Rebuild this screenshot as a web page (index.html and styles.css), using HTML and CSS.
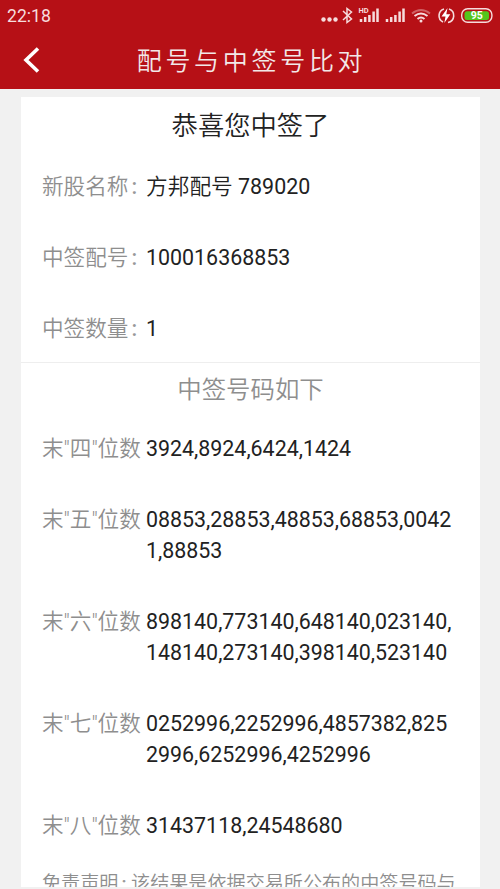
FILE: index.html
```html
<!DOCTYPE html>
<html lang="zh-CN">
<head>
<meta charset="utf-8">
<title>配号与中签号比对</title>
<link rel="stylesheet" href="styles.css">
</head>
<body>
<header>
  <div class="status">
    <span class="time">22:18</span>
    <svg class="icons" width="180" height="32" viewBox="0 0 180 32" fill="none" stroke="#f6dcdd">
      <g fill="#f6dcdd" stroke="none"><circle cx="3.500" cy="19.500" r="2.200"/><circle cx="9.500" cy="19.500" r="2.200"/><circle cx="15.500" cy="19.500" r="2.200"/></g>
      <path d="M23 11l8.500 8-4.500 3.500V8.500l4.500 3.500-8.500 8" stroke-width="1.500"/>
      <text x="38.500" y="13" class="hd">HD</text>
      <path d="M41 22v-3M45.200 22v-5M49.400 22v-7M53.600 22V11.500M57.500 22V8.500M67 22v-3M71.200 22v-5M75.400 22v-7M79.600 22V11.500M83.500 22V8.500" stroke-width="2.500"/>
      <path d="M92 13.500q9-7 18 0" stroke-width="2" opacity=".4"/>
      <path d="M94.500 16q6.500-5 13 0M97.500 19q3.500-3 7 0" stroke-width="2"/>
      <circle cx="101" cy="21" r="1.500" fill="#f6dcdd" stroke="none"/>
      <path d="M124 9a7 7 0 0 0-1 13M128 22.500a7 7 0 0 0 1-13.500" stroke-width="1.600"/>
      <path d="M127.500 8l-6 8.500h4l-1.200 6.500 6-8.800h-4z" fill="#fff" stroke="none"/>
      <rect x="141.700" y="8.800" width="30.200" height="13.500" rx="6" stroke-width="1.400"/>
      <rect x="144.500" y="11.200" width="24.500" height="8.800" rx="2.500" fill="#54c51c" stroke="none"/>
      <text x="156.700" y="19" class="battery">95</text>
    </svg>
  </div>
  <div class="nav">
    <svg class="back" width="20" height="30" viewBox="0 0 20 30"><path d="M17 2.500L5 14l12 11.500" fill="none" stroke="#fff" stroke-width="3.600"/></svg>
    <h1>配号与中签号比对</h1>
  </div>
</header>
<main>
  <h2>恭喜您中签了</h2>
  <dl class="summary">
    <dt>新股名称<span class="colon">:</span></dt><dd><span class="stock">方邦配号</span> 789020</dd>
    <dt>中签配号<span class="colon">:</span></dt><dd>100016368853</dd>
    <dt>中签数量<span class="colon">:</span></dt><dd>1</dd>
  </dl>
  <h3>中签号码如下</h3>
  <dl>
    <dt>末"四"位数</dt><dd>3924,8924,6424,1424</dd>
    <dt>末"五"位数</dt><dd>08853,28853,48853,68853,00421,88853</dd>
    <dt>末"六"位数</dt><dd>898140,773140,648140,023140,148140,273140,398140,523140</dd>
    <dt>末"七"位数</dt><dd>0252996,2252996,4857382,8252996,6252996,4252996</dd>
    <dt>末"八"位数</dt><dd>31437118,24548680</dd>
  </dl>
  <p>免责声明<span class="colon">:</span> 该结果是依据交易所公布的中签号码与</p>
</main>
</body>
</html>
```
FILE: styles.css
```css
* { box-sizing: border-box; }
body { margin: 0; height: 889px; overflow: hidden; background: #f1f1f1; font-family: Roboto, "Noto Sans CJK SC", sans-serif; color: #222; }
header { height: 89px; background: #b61016; color: #fff; }
.status { height: 32px; display: flex; justify-content: space-between; padding-left: 7px; }
.time { font-size: 17.6px; line-height: 32px; color: #f6dcdd; }
.hd { font-size: 7.5px; font-weight: bold; fill: #f6dcdd; stroke: none; }
.battery { font-size: 10.5px; font-weight: bold; fill: #fff; stroke: none; text-anchor: middle; }
.nav { height: 57px; display: grid; grid-template-columns: 60px 1fr 60px; align-items: center; }
.back { margin-left: 21px; }
h1 { margin: 1px 0 0 3px; font-size: 25px; line-height: 57px; font-weight: 350; letter-spacing: 3.7px; text-align: center; white-space: nowrap; color: #f2e8e8; }
main { width: 459px; height: 790px; margin: 8px 0 0 21px; background: #fff; overflow: hidden; }
h2 { margin: 0; height: 54px; line-height: 58px; font-size: 26.3px; font-weight: 350; text-align: center; }
dl { margin: 0; display: grid; grid-template-columns: 104px 308px; row-gap: 40px; align-content: start; padding: 0 0 0 21px; font-size: 21.4px; line-height: 31px; }
dt { color: #8e8e8e; font-weight: 350; font-size: 21.6px; white-space: nowrap; }
dd { margin: 0; word-break: break-all; }
.stock { font-weight: 350; font-size: 21.7px; }
.colon { font-weight: 500; margin-left: 3px; color: #999; }
.summary { padding-top: 20px; height: 212px; border-bottom: 1px solid #eee; }
h3 { margin: 0; height: 70px; line-height: 53px; font-size: 24.4px; font-weight: 350; color: #8e8e8e; text-align: center; }
p { margin: 27px 0 0 21px; font-size: 19.1px; line-height: 31px; font-weight: 350; color: #8e8e8e; white-space: nowrap; }
```
